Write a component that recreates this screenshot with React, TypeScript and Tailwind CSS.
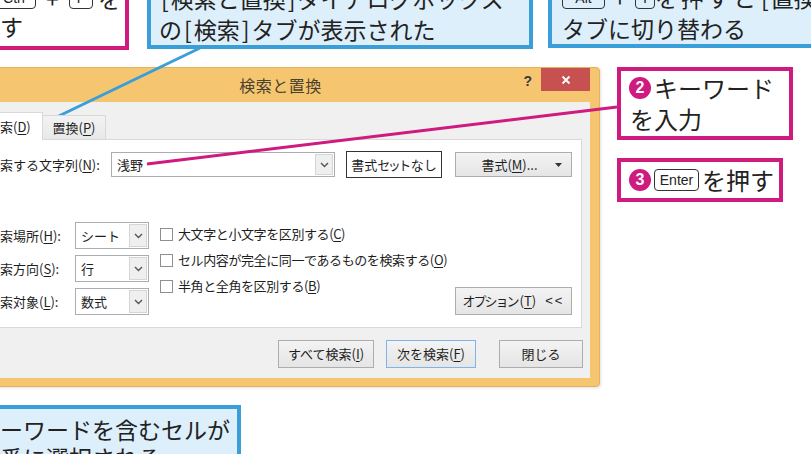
import React from "react";

function Chevron() {
  return (
    <svg width="9" height="6" viewBox="0 0 9 6">
      <polyline points="1,1 4.5,4.5 8,1" fill="none" stroke="#555" strokeWidth="1.4" />
    </svg>
  );
}

function Combo({ value, className }: { value: string; className: string }) {
  return (
    <div className={`flex items-stretch border border-[#abadb3] bg-white ${className}`}>
      <div className="flex-1 flex items-center pl-[5px] text-[13px] text-[#1e1e1e]">{value}</div>
      <div className="m-[1px] w-[18px] border border-[#d5d5d5] bg-[#efefef] flex items-center justify-center">
        <Chevron />
      </div>
    </div>
  );
}

function Mn({ children }: { children: React.ReactNode }) {
  return <span className="underline underline-offset-2">{children}</span>;
}

function Btn({ children, className = "" }: { children: React.ReactNode; className?: string }) {
  return (
    <div
      className={`flex items-center justify-center border text-[13px] text-[#1e1e1e] bg-linear-to-b from-[#f3f3f3] to-[#e5e5e5] ${className}`}
    >
      {children}
    </div>
  );
}

function Check({ children }: { children: React.ReactNode }) {
  return (
    <div className="h-[26px] flex items-center">
      <div className="w-[13px] h-[13px] border border-[#8e8f8f] bg-white" />
      <span className="ml-[5px] text-[13px] tracking-[-0.4px] text-[#1e1e1e]">{children}</span>
    </div>
  );
}

function Dialog() {
  return (
    <div className="absolute left-[-39px] top-[67px] w-[639px] h-[320px] flex flex-col bg-[#f5c66f] border border-[#e3b460] rounded-[4px] shadow-[1px_1px_3px_rgba(0,0,0,0.12)]">
      <div className="relative h-[34px] shrink-0 flex items-center justify-center">
        <span className="text-[16px] text-[#4a4030] tracking-[0.5px]">検索と置換</span>
        <span className="absolute right-[67px] top-[3px] text-[14px] font-bold text-[#3a3a3a] font-['Liberation_Sans',sans-serif]">?</span>
        <div className="absolute right-[9px] top-0 w-[49px] h-[23px] bg-[#c75050] flex items-center justify-center">
          <svg width="10" height="10" viewBox="0 0 10 10">
            <path d="M1.5 1.5 L8.5 8.5 M8.5 1.5 L1.5 8.5" stroke="#fff" strokeWidth="1.8" />
          </svg>
        </div>
      </div>

      <div className="ml-[7px] mr-[9px] h-[276px] bg-[#f0f0f0] flex flex-col pl-[7px] pr-[8px] pt-[10px]">
        {/* tabs */}
        <div className="relative z-10 flex items-end h-[28px] mb-[-1px]">
          <div className="ml-[2px] w-[65px] h-[28px] bg-white border border-b-0 border-[#d9d9d9] flex items-center pl-[8px] text-[13px] text-[#1e1e1e]">
            検索(<Mn>D</Mn>)
          </div>
          <div className="w-[63px] h-[25px] bg-linear-to-b from-[#f3f3f3] to-[#e8e8e8] border border-l-0 border-[#d9d9d9] flex items-center justify-center text-[13px] text-[#1e1e1e]">
            置換(<Mn>P</Mn>)
          </div>
        </div>

        {/* panel */}
        <div className="h-[189px] border border-[#d9d9d9] bg-white pl-[10px] pt-[11px] pr-[9px] flex flex-col">
          <div className="flex items-center h-[27px]">
            <div className="w-[124px] text-[13px] text-[#1e1e1e]">
              検索する文字列(<Mn>N</Mn>):
            </div>
            <Combo value="浅野" className="w-[224px] h-[25px]" />
            <div className="ml-[11px] w-[96px] h-[27px] border border-[#333] bg-white flex items-center justify-center text-[13px] text-[#1e1e1e]">
              書式<span className="tracking-[-2.5px] mr-[2px]">セット</span>なし
            </div>
            <Btn className="ml-[13px] w-[117px] h-[25px] border-[#adadad] justify-start">
              <span className="flex-1 text-center pl-[8px]">
                書式(<Mn>M</Mn>)...
              </span>
              <span className="w-[16px] flex items-center">
                <svg width="7" height="4" viewBox="0 0 7 4">
                  <path d="M0 0 H7 L3.5 4 Z" fill="#333" />
                </svg>
              </span>
            </Btn>
          </div>

          <div className="flex mt-[44px]">
            <div className="flex flex-col gap-[6px]">
              <div className="flex items-center h-[27px]">
                <div className="w-[88px] text-[13px] text-[#1e1e1e]">
                  検索場所(<Mn>H</Mn>):
                </div>
                <Combo value="シート" className="w-[74px] h-[27px]" />
              </div>
              <div className="flex items-center h-[27px]">
                <div className="w-[88px] text-[13px] text-[#1e1e1e]">
                  検索方向(<Mn>S</Mn>):
                </div>
                <Combo value="行" className="w-[74px] h-[27px]" />
              </div>
              <div className="flex items-center h-[27px]">
                <div className="w-[88px] text-[13px] text-[#1e1e1e]">
                  検索対象(<Mn>L</Mn>):
                </div>
                <Combo value="数式" className="w-[74px] h-[27px]" />
              </div>
            </div>

            <div className="ml-[11px] mt-[-1px] flex flex-col">
              <Check>
                大文字と小文字を区別する(<Mn>C</Mn>)
              </Check>
              <Check>
                セル内容が完全に同一であるものを検索する(<Mn>O</Mn>)
              </Check>
              <Check>
                半角と全角を区別する(<Mn>B</Mn>)
              </Check>
            </div>

            <Btn className="ml-auto self-end w-[117px] h-[28px] border-[#adadad]">
              <span className="tracking-[-2px]">オプション</span>
              <span className="ml-[2px]">
                (<Mn>T</Mn>)
              </span>
              <span className="ml-[9px] font-['Liberation_Sans',sans-serif] text-[13px] tracking-[2px]">&lt;&lt;</span>
            </Btn>
          </div>
        </div>

        {/* bottom buttons */}
        <div className="mt-[12px] mr-[-1px] flex justify-end">
          <Btn className="w-[96px] h-[28px] border-[#adadad]">
            すべて検索(<Mn>I</Mn>)
          </Btn>
          <Btn className="ml-[12px] w-[90px] h-[28px] border-[#7eb4ea] from-[#f2f6fb] to-[#e4edf7]">
            次を検索(<Mn>F</Mn>)
          </Btn>
          <Btn className="ml-[23px] w-[84px] h-[28px] border-[#adadad]">閉じる</Btn>
        </div>
      </div>
    </div>
  );
}

function Num({ n }: { n: string }) {
  return (
    <span className="inline-flex w-[22px] h-[22px] rounded-full bg-[#cf1a7f] text-white items-center justify-center text-[16px] font-bold font-['Liberation_Sans',sans-serif] leading-none shrink-0">
      {n}
    </span>
  );
}

function Key({ children, className = "" }: { children: React.ReactNode; className?: string }) {
  return (
    <span
      className={`inline-flex items-center justify-center border-[1.5px] border-[#333] rounded-[4px] text-[14px] leading-none font-['Liberation_Sans',sans-serif] text-[#222] ${className}`}
    >
      {children}
    </span>
  );
}

function Br({ children }: { children: React.ReactNode }) {
  return <span className="mx-[2px]">{children}</span>;
}

export default function App() {
  return (
    <div className="relative w-[811px] h-[454px] overflow-hidden bg-white font-['Noto_Sans_CJK_JP','Noto_Sans',sans-serif]">
      <Dialog />

      <svg className="absolute left-0 top-0 pointer-events-none" width="811" height="454">
        <line x1="200" y1="48" x2="36" y2="127" stroke="#3a9fd9" strokeWidth="3" />
        <line x1="147" y1="164" x2="617" y2="107" stroke="#cf1a7f" strokeWidth="3" />
      </svg>

      {/* step 1 (top-left) */}
      <div className="absolute left-[-200px] top-[-40px] w-[329px] h-[90px] border-4 border-[#cf1a7f] bg-white pl-[163px] pt-[20px] text-[23px] leading-[28px] text-[#222]">
        <div className="flex items-center h-[28px]">
          <Num n="1" />
          <Key className="ml-[3px] w-[44px] h-[22px]">Ctrl</Key>
          <span className="w-[33px] text-center">+</span>
          <Key className="w-[24px] h-[22px]">F</Key>
          <span className="ml-[5px]">を</span>
        </div>
        <div className="ml-[10px]">押す</div>
      </div>

      {/* dialog shown */}
      <div className="absolute left-[147px] top-[-30px] w-[386px] h-[79px] border-4 border-[#3a9fd9] bg-[#ddeffa] pl-[8px] pt-[9px] text-[23px] leading-[31px] text-[#222] whitespace-nowrap">
        <div>
          <Br>[</Br>検索と置換<Br>]</Br>ダイアログボックス
        </div>
        <div>
          の<Br>[</Br>検索<Br>]</Br>タブが表示された
        </div>
      </div>

      {/* replace tab */}
      <div className="absolute left-[548px] top-[-30px] w-[330px] h-[78px] border-4 border-[#3a9fd9] bg-[#ddeffa] pl-[10px] pt-[8px] text-[23px] leading-[31px] text-[#222]">
        <div className="flex items-center h-[31px] whitespace-nowrap">
          <Key className="w-[43px] h-[22px]">Alt</Key>
          <span className="w-[30px] text-center">+</span>
          <Key className="w-[20px] h-[22px]">T</Key>
          <span className="tracking-[3px]">を押すと</span>
          <span>
            <Br>[</Br>置換<Br>]</Br>
          </span>
        </div>
        <div>タブに切り替わる</div>
      </div>

      {/* step 2 */}
      <div className="absolute left-[617px] top-[67px] w-[176px] h-[73px] border-4 border-[#cf1a7f] bg-white pl-[8px] pt-[1px] text-[24px] leading-[31px] text-[#222]">
        <div className="flex items-center h-[31px]">
          <Num n="2" />
          <span className="ml-[3px]">キーワード</span>
        </div>
        <div className="pl-[1px]">を入力</div>
      </div>

      {/* step 3 */}
      <div className="absolute left-[617px] top-[158px] w-[166px] h-[44px] border-4 border-[#cf1a7f] bg-white pl-[8px] text-[24px] text-[#222] flex items-center">
        <Num n="3" />
        <Key className="ml-[3px] w-[45px] h-[22px] text-[13px]">Enter</Key>
        <span className="ml-[3px]">を押す</span>
      </div>

      {/* result */}
      <div className="absolute left-[-100px] top-[405px] w-[341px] h-[80px] border-4 border-[#3a9fd9] bg-[#ddeffa] pl-[73px] pt-[6px] text-[23px] leading-[28px] text-[#222]">
        <div>キーワードを含むセルが</div>
        <div>順番に選択される</div>
      </div>
    </div>
  );
}
